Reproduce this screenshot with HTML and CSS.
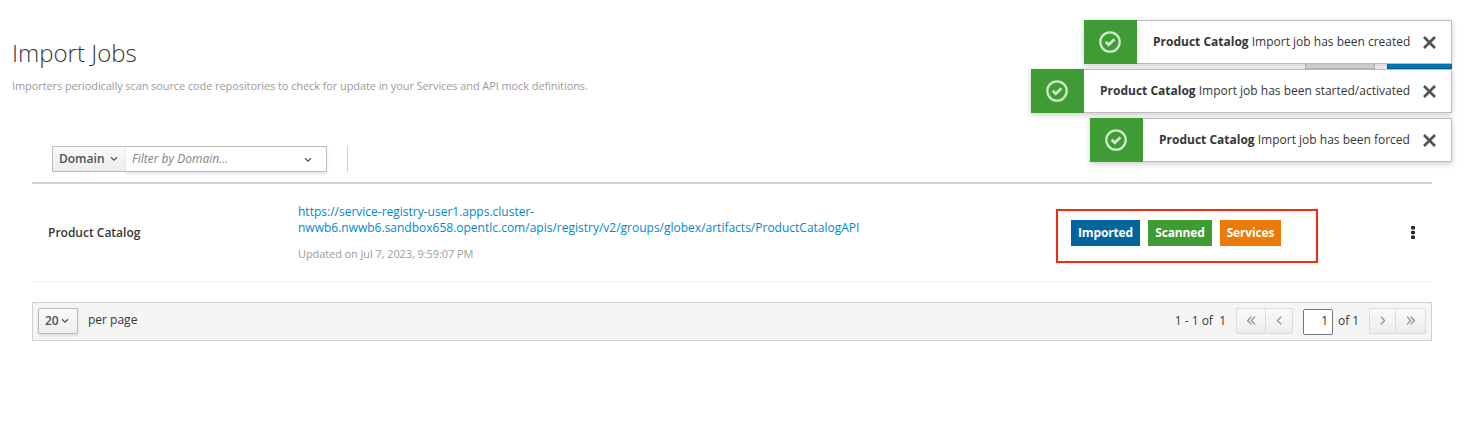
FILE: index.html
```html
<!DOCTYPE html>
<html lang="en">
<head>
<meta charset="utf-8">
<title>Import Jobs</title>
<link rel="stylesheet" href="styles.css">
</head>
<body>
<header class="page-header">
  <div class="heading">
    <h1>Import Jobs</h1>
    <p class="intro">Importers periodically scan source code repositories to check for update in your Services and API mock definitions.</p>
  </div>
  <div class="header-actions"><span class="action action-default"></span><span class="action action-primary"></span></div>
</header>
<main class="content">
  <div class="toolbar">
    <div class="filter">
      <button class="filter-field">Domain<svg class="chevron" viewBox="0 0 8 6"><path d="M1 1.2 4 4.2 7 1.2"/></svg></button>
      <div class="filter-value"><em>Filter by Domain...</em><svg class="chevron" viewBox="0 0 8 6"><path d="M1 1.2 4 4.2 7 1.2"/></svg></div>
    </div>
    <div class="divider"></div>
  </div>
  <div class="job-row">
    <strong class="job-name">Product Catalog</strong>
    <div class="job-source">
      <a class="job-link">https://service-registry-user1.apps.cluster-<br>nwwb6.nwwb6.sandbox658.opentlc.com/apis/registry/v2/groups/globex/artifacts/ProductCatalogAPI</a>
      <small class="updated">Updated on Jul 7, 2023, 9:59:07 PM</small>
    </div>
    <div class="job-status">
      <span class="label imported">Imported</span><span class="label scanned">Scanned</span><span class="label services">Services</span>
    </div>
    <svg class="kebab" viewBox="0 0 4 13"><rect x="0" y="0" width="4" height="3.4" rx="1"/><rect x="0" y="4.8" width="4" height="3.4" rx="1"/><rect x="0" y="9.6" width="4" height="3.4" rx="1"/></svg>
  </div>
  <div class="pagination">
    <button class="page-size">20<svg class="chevron" viewBox="0 0 8 6"><path d="M1 1.2 4 4.2 7 1.2"/></svg></button>
    <span class="per-page">per page</span>
    <span class="range">1 - 1 of&nbsp; 1</span>
    <div class="pager">
      <span class="first"><svg viewBox="0 0 9 9"><path d="M4.3.7.7 4.5 4.3 8.3M8 .7 4.4 4.5 8 8.3"/></svg></span>
      <span class="prev"><svg viewBox="0 0 9 9"><path d="M6.2.7 2.4 4.5 6.2 8.3"/></svg></span>
    </div>
    <span class="page-input">1</span>
    <span class="page-total">of 1</span>
    <div class="pager">
      <span class="next"><svg viewBox="0 0 9 9"><path d="M2.8.7 6.6 4.5 2.8 8.3"/></svg></span>
      <span class="last"><svg viewBox="0 0 9 9"><path d="M1 .7 4.6 4.5 1 8.3M4.7.7 8.3 4.5 4.7 8.3"/></svg></span>
    </div>
  </div>
</main>
<aside class="toasts">
  <div class="toast created">
    <span class="toast-icon"><svg viewBox="0 0 22 22"><circle cx="11" cy="11" r="9.7"/><path d="m6.7 10.8 3 3 5.8-5.6"/></svg></span>
    <p><b>Product Catalog</b> Import job has been created</p>
    <svg class="close" viewBox="0 0 13 13"><path d="m1 1 11 11M12 1 1 12"/></svg>
  </div>
  <div class="toast started">
    <span class="toast-icon"><svg viewBox="0 0 22 22"><circle cx="11" cy="11" r="9.7"/><path d="m6.7 10.8 3 3 5.8-5.6"/></svg></span>
    <p><b>Product Catalog</b> Import job has been started/activated</p>
    <svg class="close" viewBox="0 0 13 13"><path d="m1 1 11 11M12 1 1 12"/></svg>
  </div>
  <div class="toast forced">
    <span class="toast-icon"><svg viewBox="0 0 22 22"><circle cx="11" cy="11" r="9.7"/><path d="m6.7 10.8 3 3 5.8-5.6"/></svg></span>
    <p><b>Product Catalog</b> Import job has been forced</p>
    <svg class="close" viewBox="0 0 13 13"><path d="m1 1 11 11M12 1 1 12"/></svg>
  </div>
</aside>
</body>
</html>
```
FILE: styles.css
```css
* { box-sizing: border-box; }
body {
  margin: 0;
  min-height: 421px;
  background: #fff;
  color: #363636;
  font: 12px/16px "Open Sans", "Noto Sans", sans-serif;
}
button { font: inherit; margin: 0; }
h1, p { margin: 0; }
svg { display: block; flex: none; fill: none; stroke: currentColor; }

.page-header {
  display: flex;
  justify-content: space-between;
  height: 146px;
  padding: 39px 20px 0 12px;
}
h1 { font-size: 24px; font-weight: 300; line-height: 27px; }
.intro { margin-top: 12px; color: #9c9c9c; font-size: 11px; letter-spacing: -.09px; }
.header-actions { display: flex; gap: 12px; padding-top: 5px; }
.action { height: 25px; border: 1px solid #bbb; }
.action-default { width: 70px; background: #e4e4e4; }
.action-primary { width: 65px; background: #0085c7; border-color: #00659c; }

.content { padding: 0 40px 0 32px; }
.toolbar {
  display: flex;
  gap: 20px;
  height: 38px;
  padding-left: 20px;
  border-bottom: 2px solid #d1d1d1;
}
.filter { display: flex; width: 275px; height: 26px; }
.filter-field {
  display: flex;
  align-items: center;
  justify-content: space-between;
  width: 74px;
  padding: 0 8px 0 6px;
  border: 1px solid #bbb;
  border-right: 0;
  border-radius: 1px 0 0 1px;
  background: linear-gradient(#fafafa, #ededed);
  color: #4d5258;
  font-weight: 600;
}
.filter-value {
  display: flex;
  flex: 1;
  align-items: center;
  justify-content: space-between;
  padding: 0 14px 0 6px;
  border: 1px solid #bbb;
  border-left: 0;
  background: #fff;
  box-shadow: 0 2px 3px rgba(3, 3, 3, .1);
  color: #828589;
}
.filter-value .chevron { margin-top: 2px; color: #4d5258; }
.chevron { width: 8px; height: 6px; stroke-width: 1.3; }
.divider { width: 1px; height: 26px; background: #d1d1d1; }

.job-row {
  display: flex;
  align-items: center;
  height: 98px;
  padding: 0 17px 0 16px;
  border-bottom: 1px solid #ededed;
}
.job-name { width: 250px; font-weight: 600; }
.job-source { width: 758px; padding-top: 1px; }
.job-link { display: block; color: #0088ce; }
.updated { display: block; margin-top: 10px; color: #9c9c9c; font-size: 11px; letter-spacing: -.09px; }
.job-status {
  display: flex;
  gap: 8px;
  width: 262px;
  height: 54px;
  margin-top: 7px;
  padding: 9px 13px;
  border: 2px solid #f52a0a;
}
.label { height: 26px; color: #fff; font-weight: 700; letter-spacing: -.15px; line-height: 26px; text-align: center; }
.imported { width: 69px; background: #00659c; }
.scanned { width: 64px; background: #3f9c35; }
.services { width: 61px; background: #ec7a08; }
.kebab { width: 4px; height: 13px; margin-left: auto; fill: #292929; stroke: none; }

.pagination {
  display: flex;
  align-items: center;
  height: 39px;
  margin-top: 20px;
  padding: 0 5px 2px;
  border: 1px solid #d1d1d1;
  background: #f5f5f5;
}
.page-size {
  display: flex;
  align-items: center;
  gap: 2px;
  width: 40px;
  height: 26px;
  padding: 0 6px;
  border: 1px solid #bbb;
  border-radius: 1px;
  background: linear-gradient(#fafafa, #ededed);
  box-shadow: 0 2px 3px rgba(3, 3, 3, .1);
  color: #4d5258;
  font-weight: 600;
}
.per-page { margin-left: 10px; padding-bottom: 2px; }
.range { margin-left: auto; }
.pager { display: flex; }
.pager span {
  display: flex;
  align-items: center;
  justify-content: center;
  height: 26px;
  border: 1px solid #dcdcdc;
  background: linear-gradient(#fafafa, #ededed);
  color: #8b8d8f;
}
.pager svg { width: 9px; height: 9px; stroke-width: 1.2; }
.range + .pager { margin-left: 10px; }
.pager .first { width: 30px; }
.pager .prev { width: 28px; margin-left: -1px; }
.pager .next { width: 27px; }
.pager .last { width: 31px; margin-left: -1px; }
.page-input {
  width: 30px;
  height: 26px;
  margin: 2px 5px 0 10px;
  padding-right: 4px;
  border: 1px solid #767676;
  border-radius: 2px;
  background: #fff;
  line-height: 22px;
  text-align: right;
}
.page-total { width: 31px; }

.toasts {
  position: absolute;
  top: 20px;
  right: 20px;
  display: flex;
  flex-direction: column;
  align-items: flex-end;
  gap: 5px;
}
.toast {
  display: flex;
  align-items: center;
  height: 44px;
  padding-right: 15px;
  border: 1px solid #bbb;
  border-left: 0;
  background: #fff;
  box-shadow: 0 2px 6px rgba(3, 3, 3, .2);
  white-space: nowrap;
}
.created { width: 368px; }
.started { width: 421px; }
.forced { width: 362px; }
.toast-icon {
  display: flex;
  flex: none;
  align-items: center;
  justify-content: center;
  width: 53px;
  height: 44px;
  padding-right: 1px;
  background: #3f9c35;
  color: #cfe7cc;
}
.toast-icon svg { width: 22px; height: 22px; stroke-width: 2.3; }
.toast-icon path { stroke-width: 2.7; }
.toast p { margin-left: 16px; padding-bottom: 1px; }
.toast b { font-weight: 700; }
.close { width: 13px; height: 13px; margin-left: auto; color: #4d5258; stroke-width: 2.7; }
```
